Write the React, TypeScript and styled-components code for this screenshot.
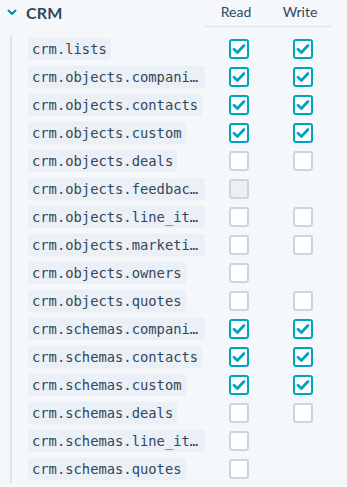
import React from "react";
import styled, { createGlobalStyle } from "styled-components";

const Global = createGlobalStyle`
  html, body { margin: 0; padding: 0; background: #f5f8fa; }
  body { font-family: Lato, "Open Sans", sans-serif; color: #33475b; }
`;

const Page = styled.div`
  padding: 0 15px 0 7px;
  height: 487px;
  overflow: hidden;
`;

const Header = styled.div`
  display: flex;
  align-items: stretch;
  height: 27px;
`;

const Title = styled.div`
  flex: 1;
  display: flex;
  align-items: center;
  gap: 9px;
  font-size: 16px;
  font-weight: 700;
  letter-spacing: 0.2px;
  padding-bottom: 2px;
`;

const ColHead = styled.div`
  width: 64px;
  display: flex;
  align-items: center;
  justify-content: center;
  font-size: 14px;
  border-bottom: 1px solid #dfe3eb;
  padding-bottom: 3px;
  box-sizing: border-box;
`;

const Body = styled.div`
  margin: 8px 0 0 3px;
  border-left: 2px solid #dfe3eb;
  padding-left: 16px;
`;

const Row = styled.div`
  display: grid;
  grid-template-columns: 177px 64px 64px;
  align-items: center;
  height: 28px;
`;

const Scope = styled.code`
  justify-self: start;
  max-width: 100%;
  box-sizing: border-box;
  background: #eaf0f6;
  border-radius: 3px;
  padding: 0 4px;
  height: 22px;
  line-height: 22px;
  font-family: "DejaVu Sans Mono", "Liberation Mono", monospace;
  font-size: 13.8px;
  white-space: nowrap;
  overflow: hidden;
  text-overflow: ellipsis;
`;

const Cell = styled.div`
  display: flex;
  justify-content: center;
  padding-left: 4px;
`;

const Box = styled.span<{ $checked?: boolean; $disabled?: boolean }>`
  width: 20px;
  height: 20px;
  box-sizing: border-box;
  border-radius: 3px;
  border: 2px solid ${(p) => (p.$checked ? "#00a4bd" : "#cbd6e2")};
  background: ${(p) => (p.$disabled ? "#eaf0f6" : "#fff")};
  display: flex;
  align-items: center;
  justify-content: center;
`;

type State = "on" | "off" | "disabled" | null;

const Check = ({ state }: { state: State }) => {
  if (!state) return <Cell />;
  return (
    <Cell>
      <Box $checked={state === "on"} $disabled={state === "disabled"}>
        {state === "on" && (
          <svg width="14" height="12" viewBox="0 0 14 12">
            <path d="M2 6.2 L5.4 9.4 L12 2.6" fill="none" stroke="#00a4bd" strokeWidth="2.8" strokeLinecap="round" strokeLinejoin="round" />
          </svg>
        )}
      </Box>
    </Cell>
  );
};

const scopes: [string, State, State][] = [
  ["crm.lists", "on", "on"],
  ["crm.objects.companies", "on", "on"],
  ["crm.objects.contacts", "on", "on"],
  ["crm.objects.custom", "on", "on"],
  ["crm.objects.deals", "off", "off"],
  ["crm.objects.feedback_submissions", "disabled", null],
  ["crm.objects.line_items", "off", "off"],
  ["crm.objects.marketing_events", "off", "off"],
  ["crm.objects.owners", "off", null],
  ["crm.objects.quotes", "off", "off"],
  ["crm.schemas.companies", "on", "on"],
  ["crm.schemas.contacts", "on", "on"],
  ["crm.schemas.custom", "on", "on"],
  ["crm.schemas.deals", "off", "off"],
  ["crm.schemas.line_items", "off", null],
  ["crm.schemas.quotes", "off", null],
];

export default function App() {
  return (
    <>
      <Global />
      <Page>
        <Header>
          <Title>
            <svg width="10" height="7" viewBox="0 0 10 7">
              <path d="M1.5 1.5 L5 5 L8.5 1.5" fill="none" stroke="#0091ae" strokeWidth="2" strokeLinecap="round" strokeLinejoin="round" />
            </svg>
            CRM
          </Title>
          <ColHead>Read</ColHead>
          <ColHead>Write</ColHead>
        </Header>
        <Body>
          {scopes.map(([name, r, w]) => (
            <Row key={name}>
              <Scope>{name}</Scope>
              <Check state={r} />
              <Check state={w} />
            </Row>
          ))}
        </Body>
      </Page>
    </>
  );
}
